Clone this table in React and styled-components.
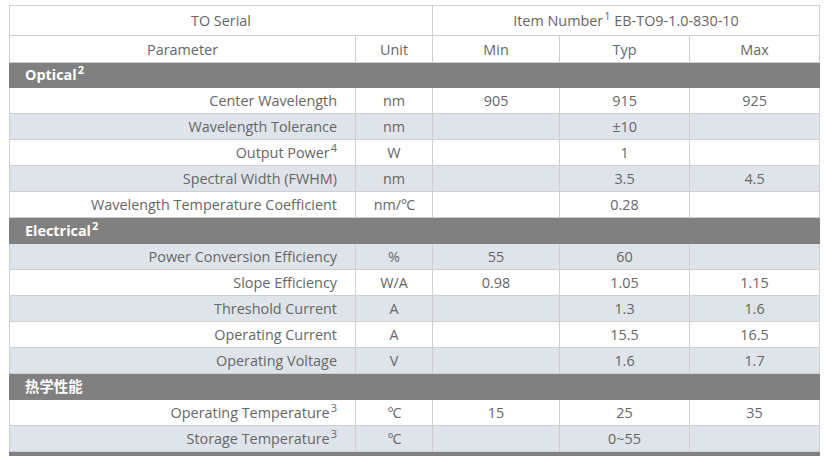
import React from "react";
import styled, { createGlobalStyle } from "styled-components";

const Global = createGlobalStyle`
  html, body { margin: 0; padding: 0; background: #fff; }
  body { padding: 5px 9px 0 9px; font-family: "Open Sans", "Noto Sans CJK SC", sans-serif; }
`;

const Table = styled.table`
  width: 810px;
  border-collapse: collapse;
  table-layout: fixed;
  font-size: 14.4px;
  color: #666;
`;

const Row = styled.tr`
  background: ${(p) => (p.$shade ? "#dfe4ea" : "#fff")};
  height: ${(p) => p.$h || 26}px;
`;

const Cell = styled.td`
  border: 1px solid #cfcfcf;
  padding: 1px ${(p) => (p.$right ? "18px" : "4px")} 0 4px;
  text-align: ${(p) => (p.$right ? "right" : "center")};
  white-space: nowrap;
  line-height: 18px;
  vertical-align: middle;
`;

const SectionRow = styled.tr`
  background: #808080;
  height: ${(p) => p.$h || 26}px;
`;

const SectionCell = styled.td`
  border: 1px solid #808080;
  border-left-color: ${(p) => (p.$divided ? "#cfcfcf" : "#808080")};
  border-top-color: #cfcfcf;
  color: #fff;
  font-weight: 700;
  text-align: left;
  padding: 0 0 0 15px;
  line-height: 18px;
`;

const Sup = styled.sup`
  font-size: 11px;
  line-height: 0;
  vertical-align: 6px;
  margin-left: 1px;
`;

const Deg = styled.span`
  letter-spacing: -1px;
`;

const C = () => <Deg>°C</Deg>;

const sections = [
  {
    title: "Optical",
    sup: "2",
    divided: true,
    h: 25,
    rows: [
      ["Center Wavelength", "", "nm", "905", "915", "925"],
      ["Wavelength Tolerance", "", "nm", "", "±10", ""],
      ["Output Power", "4", "W", "", "1", ""],
      ["Spectral Width (FWHM)", "", "nm", "", "3.5", "4.5"],
      ["Wavelength Temperature Coefficient", "", <>nm/<C /></>, "", "0.28", ""],
    ],
    shadeOdd: true,
  },
  {
    title: "Electrical",
    sup: "2",
    rows: [
      ["Power Conversion Efficiency", "", "%", "55", "60", ""],
      ["Slope Efficiency", "", "W/A", "0.98", "1.05", "1.15"],
      ["Threshold Current", "", "A", "", "1.3", "1.6"],
      ["Operating Current", "", "A", "", "15.5", "16.5"],
      ["Operating Voltage", "", "V", "", "1.6", "1.7"],
    ],
    shadeOdd: false,
  },
  {
    title: "热学性能",
    sup: "",
    rows: [
      ["Operating Temperature", "3", <C />, "15", "25", "35"],
      ["Storage Temperature", "3", <C />, "", "0~55", ""],
    ],
    shadeOdd: true,
  },
];

export default function App() {
  return (
    <>
      <Global />
      <Table>
        <colgroup>
          <col style={{ width: 346 }} />
          <col style={{ width: 77 }} />
          <col style={{ width: 127 }} />
          <col style={{ width: 130 }} />
          <col style={{ width: 130 }} />
        </colgroup>
        <tbody>
          <Row $h={30}>
            <Cell colSpan={2}>TO Serial</Cell>
            <Cell colSpan={3}>
              Item Number<Sup>1</Sup> EB-TO9-1.0-830-10
            </Cell>
          </Row>
          <Row $h={27}>
            <Cell>Parameter</Cell>
            <Cell>Unit</Cell>
            <Cell>Min</Cell>
            <Cell>Typ</Cell>
            <Cell>Max</Cell>
          </Row>
          {sections.map((s) => (
            <React.Fragment key={s.title}>
              <SectionRow $h={s.h}>
                {s.divided ? (
                  <>
                    <SectionCell>
                      {s.title}
                      {s.sup && <Sup>{s.sup}</Sup>}
                    </SectionCell>
                    <SectionCell $divided />
                    <SectionCell $divided />
                    <SectionCell $divided />
                    <SectionCell $divided />
                  </>
                ) : (
                  <SectionCell colSpan={5}>
                    {s.title}
                    {s.sup && <Sup>{s.sup}</Sup>}
                  </SectionCell>
                )}
              </SectionRow>
              {s.rows.map((r, i) => (
                <Row key={r[0]} $shade={s.shadeOdd ? i % 2 === 1 : i % 2 === 0}>
                  <Cell $right>
                    {r[0]}
                    {r[1] && <Sup>{r[1]}</Sup>}
                  </Cell>
                  <Cell>{r[2]}</Cell>
                  <Cell>{r[3]}</Cell>
                  <Cell>{r[4]}</Cell>
                  <Cell>{r[5]}</Cell>
                </Row>
              ))}
            </React.Fragment>
          ))}
          <SectionRow>
            <SectionCell colSpan={5}>&nbsp;</SectionCell>
          </SectionRow>
        </tbody>
      </Table>
    </>
  );
}
